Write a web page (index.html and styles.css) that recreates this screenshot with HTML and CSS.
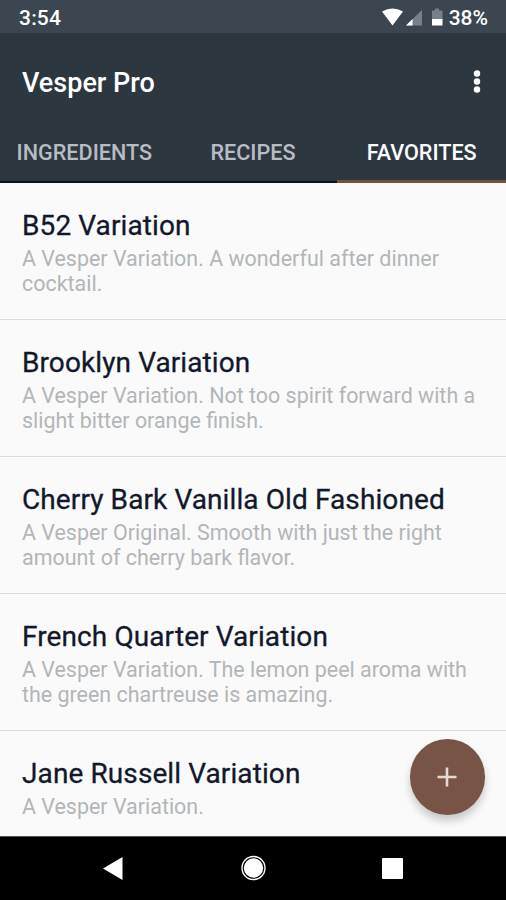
FILE: index.html
```html
<!DOCTYPE html>
<html lang="en">
<head>
    <meta charset="UTF-8">
    <meta name="viewport" content="width=device-width, initial-scale=1.0">
    <title>Vesper Pro</title>
    <link rel="stylesheet" href="styles.css">
</head>
<body>
    <div class="phone">
        <div class="status">
            <span class="time">3:54</span>
            <svg class="signals" width="62" height="20" viewBox="0 0 62 20">
                <path d="M0 4.5Q10.500 -1.500 21 4.500L10.500 18.500Z" fill="#fff"/>
                <path d="M24 18.500L40 3V18.500Z" fill="#76818a"/>
                <path d="M24 18.500L30.500 12V18.500Z" fill="#fff"/>
                <path d="M50 12V3.500H53V1.500H57V3.500H60.500V12Z" fill="#76818a"/>
                <path d="M50 12H60.500V18.500H50Z" fill="#fff"/>
            </svg>
            <span class="percent">38%</span>
        </div>
        <header class="toolbar">
            <h1 class="title">Vesper Pro</h1>
            <svg class="more" width="8" height="24" viewBox="0 0 8 24">
                <circle cx="4" cy="3.500" r="3.200"/>
                <circle cx="4" cy="11.500" r="3.200"/>
                <circle cx="4" cy="19.500" r="3.200"/>
            </svg>
        </header>
        <nav class="tabs">
            <div class="tab">INGREDIENTS</div>
            <div class="tab">RECIPES</div>
            <div class="tab active">FAVORITES</div>
        </nav>
        <main class="list">
            <div class="item">
                <h2 class="name">B52 Variation</h2>
                <p class="desc">A Vesper Variation. A wonderful after dinner<br>cocktail.</p>
            </div>
            <div class="item">
                <h2 class="name">Brooklyn Variation</h2>
                <p class="desc">A Vesper Variation. Not too spirit forward with a<br>slight bitter orange finish.</p>
            </div>
            <div class="item">
                <h2 class="name">Cherry Bark Vanilla Old Fashioned</h2>
                <p class="desc">A Vesper Original. Smooth with just the right<br>amount of cherry bark flavor.</p>
            </div>
            <div class="item">
                <h2 class="name">French Quarter Variation</h2>
                <p class="desc">A Vesper Variation. The lemon peel aroma with<br>the green chartreuse is amazing.</p>
            </div>
            <div class="item">
                <h2 class="name">Jane Russell Variation</h2>
                <p class="desc">A Vesper Variation.</p>
            </div>
        </main>
        <button class="fab" aria-label="Add">
            <svg width="20" height="20" viewBox="0 0 20 20">
                <path d="M10 .5V19.500M.5 10H19.500" stroke="#e6d9d4" stroke-width="2.600"/>
            </svg>
        </button>
        <footer class="navbar">
            <svg width="506" height="63" viewBox="0 0 506 63">
                <path d="M103 31.500L122.500 20V43Z" fill="#fff"/>
                <circle cx="253.500" cy="31" r="11.500" fill="none" stroke="#fff" stroke-width="1.400"/>
                <circle cx="253.500" cy="31" r="9.700" fill="#fff"/>
                <rect x="382" y="21" width="21" height="21" rx="1" fill="#fff"/>
            </svg>
        </footer>
    </div>
</body>
</html>
```

FILE: styles.css
```css
*{margin:0;
padding:0;
box-sizing: border-box;}
body{font-family: Roboto, "Liberation Sans", sans-serif;background-color: #fafafa;}
.phone{position: relative;display: flex;flex-direction: column;width: 506px;height: 900px;overflow: hidden;}
.status{display: flex;align-items: center;height: 33px;padding: 2px 18px 0 19px;background-color: #3b4651;color: #fff;font-size: 21px;font-weight: 500;}
.time{letter-spacing: .2px;}
.signals{margin: -2px 5px 0 auto;}
.toolbar{display: flex;align-items: center;justify-content: space-between;height: 98px;padding: 0 25px 0 22px;background-color: #2d3740;color: #fff;}
.title{padding-top: 2px;font-size: 27px;font-weight: 500;line-height: 32px;}
.more{fill: #fff;}
.tabs{display: flex;height: 52px;background-color: #2d3740;border-bottom: 2px solid #0c1026;}
.tab{flex: 1;height: 52px;padding-top: 9px;text-align: center;color: #b8bdc4;font-size: 21.6px;font-weight: 500;line-height: 26px;}
.active{color: #fff;border-bottom: 3px solid #75503f;}
.list{flex: 1;overflow: hidden;background-color: #fafafa;}
.item{height: 137px;padding: 27px 22px 0;border-bottom: 1px solid #dcdcdc;}
.name{color: #12182b;font-size: 28px;font-weight: 400;line-height: 32px;letter-spacing: .1px;white-space: nowrap;-webkit-text-stroke: .3px #12182b;}
.desc{margin-top: 4px;color: #b2b6b9;font-size: 21.45px;line-height: 25.4px;white-space: nowrap;}
.fab{position: absolute;right: 21px;top: 739px;display: flex;align-items: center;justify-content: center;width: 75.5px;height: 75.5px;border: 0;border-radius: 50%;background-color: #785447;box-shadow: 0 6px 9px rgba(0,0,0,.2);}
.navbar{height: 64px;border-top: 1px solid #555;background-color: #000;}
```
